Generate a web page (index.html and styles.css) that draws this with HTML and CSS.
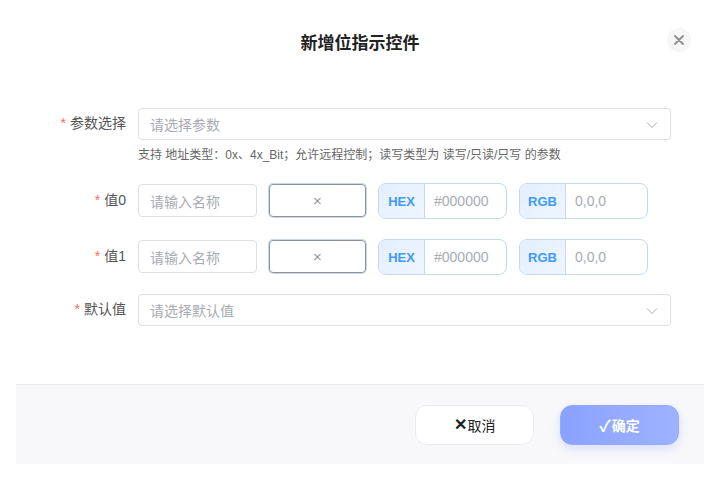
FILE: index.html
```html
<!DOCTYPE html>
<html lang="zh-CN">

<head>
    <meta charset="UTF-8">
    <meta name="viewport" content="width=device-width, initial-scale=1.0">
    <title>新增位指示控件</title>
    <link rel="stylesheet" href="styles.css">
</head>

<body>
    <div class="dialog">
        <div class="dialog-header">
            <span class="dialog-title">新增位指示控件</span>
            <button class="close-btn">
                <svg width="10" height="10" viewBox="0 0 10 10"><path d="M1 1L9 9M9 1L1 9" stroke="#8c8c8c" stroke-width="1.8" stroke-linecap="round"/></svg>
            </button>
        </div>

        <div class="dialog-body">
            <div class="form-item">
                <label class="form-label"><span class="req">*</span>参数选择</label>
                <div class="form-content">
                    <div class="select-box">
                        <span class="placeholder">请选择参数</span>
                        <svg class="chevron" width="12" height="8" viewBox="0 0 12 8"><path d="M1 1.5L6 6.5L11 1.5" fill="none" stroke="#a8abb2" stroke-width="1"/></svg>
                    </div>
                    <div class="hint">支持 地址类型：0x、4x_Bit；允许远程控制；读写类型为 读写/只读/只写 的参数</div>
                </div>
            </div>

            <div class="form-item value-item">
                <label class="form-label"><span class="req">*</span>值0</label>
                <div class="form-content value-row">
                    <div class="text-input"><span class="placeholder">请输入名称</span></div>
                    <div class="color-box">×</div>
                    <div class="code-group">
                        <span class="code-prefix">HEX</span>
                        <span class="code-value">#000000</span>
                    </div>
                    <div class="code-group">
                        <span class="code-prefix">RGB</span>
                        <span class="code-value">0,0,0</span>
                    </div>
                </div>
            </div>

            <div class="form-item value-item last-value">
                <label class="form-label"><span class="req">*</span>值1</label>
                <div class="form-content value-row">
                    <div class="text-input"><span class="placeholder">请输入名称</span></div>
                    <div class="color-box">×</div>
                    <div class="code-group">
                        <span class="code-prefix">HEX</span>
                        <span class="code-value">#000000</span>
                    </div>
                    <div class="code-group">
                        <span class="code-prefix">RGB</span>
                        <span class="code-value">0,0,0</span>
                    </div>
                </div>
            </div>

            <div class="form-item">
                <label class="form-label"><span class="req">*</span>默认值</label>
                <div class="form-content">
                    <div class="select-box">
                        <span class="placeholder">请选择默认值</span>
                        <svg class="chevron" width="12" height="8" viewBox="0 0 12 8"><path d="M1 1.5L6 6.5L11 1.5" fill="none" stroke="#a8abb2" stroke-width="1"/></svg>
                    </div>
                </div>
            </div>
        </div>

        <div class="dialog-footer">
            <button class="btn btn-cancel"><span class="btn-icon">✕</span>取消</button>
            <button class="btn btn-confirm"><span class="btn-icon">✓</span>确定</button>
        </div>
    </div>
</body>

</html>
```

FILE: styles.css
```css
body {
    margin: 0;
    font-family: "Liberation Sans", "Noto Sans CJK SC", sans-serif;
    background: #fff;
}

.dialog {
    margin-left: 16px;
    width: 688px;
    background: #fff;
}

.dialog-header {
    position: relative;
    height: 84px;
    display: flex;
    align-items: center;
    justify-content: center;
}

.dialog-title {
    font-size: 17px;
    font-weight: bold;
    color: #222;
    margin-top: -1px;
}

.close-btn {
    position: absolute;
    top: 28px;
    right: 13px;
    width: 24px;
    height: 24px;
    border: none;
    border-radius: 50%;
    background: #f6f6f7;
    padding: 0;
    display: flex;
    align-items: center;
    justify-content: center;
}

.dialog-body {
    padding: 24px 33px 58px 0;
}

.form-item {
    display: flex;
    margin-bottom: 20px;
}

.form-item:last-child {
    margin-bottom: 0;
}

.form-label {
    width: 110px;
    flex-shrink: 0;
    padding-right: 12px;
    text-align: right;
    font-size: 14px;
    color: #555;
    line-height: 30px;
}

.req {
    color: #f56c6c;
    margin-right: 4px;
}

.form-content {
    flex: 1;
}

.select-box {
    height: 30px;
    border: 1px solid #dcdfe6;
    border-radius: 4px;
    display: flex;
    align-items: center;
    justify-content: space-between;
    padding: 0 12px 0 11px;
}

.placeholder {
    font-size: 14px;
    color: #a8abb2;
}

.chevron {
    margin-top: 1px;
}

.hint {
    margin-top: 6px;
    font-size: 12px;
    line-height: 18px;
    color: #666;
}

.value-item {
    margin-bottom: 24px;
}

.value-item.last-value {
    margin-bottom: 22px;
}

.value-item .form-label {
    line-height: 32px;
}

.value-row {
    display: flex;
    gap: 11px;
    height: 32px;
}

.text-input {
    width: 119px;
    box-sizing: border-box;
    height: 33px;
    border: 1px solid #dcdfe6;
    border-radius: 4px;
    display: flex;
    align-items: center;
    padding-left: 11px;
}

.color-box {
    width: 97px;
    box-sizing: border-box;
    height: 33px;
    border: 1px solid #8c939d;
    border-radius: 4px;
    box-shadow: 0 0 0 1px #c9daef;
    display: flex;
    align-items: center;
    justify-content: center;
    font-size: 15px;
    color: #9a9a9a;
    margin-left: 1px;
}

.code-group {
    width: 129px;
    box-sizing: border-box;
    height: 36px;
    margin-top: -1px;
    border: 1px solid #c5d8ef;
    border-radius: 8px;
    display: flex;
    overflow: hidden;
    margin-left: 1px;
}

.code-prefix {
    width: 45px;
    flex-shrink: 0;
    background: linear-gradient(135deg, #e3efff, #eef5ff);
    border-right: 1px solid #c5d8ef;
    color: #3f9bf5;
    font-weight: bold;
    font-size: 13px;
    display: flex;
    align-items: center;
    justify-content: center;
}

.code-value {
    flex: 1;
    display: flex;
    align-items: center;
    padding-left: 9px;
    font-size: 14px;
    color: #a8abb2;
}

.dialog-footer {
    height: 80px;
    box-sizing: border-box;
    background: #f8f8fb;
    border-top: 1px solid #e8e8ea;
    display: flex;
    justify-content: flex-end;
    align-items: center;
    gap: 26px;
    padding-right: 25px;
}

.btn {
    width: 119px;
    height: 40px;
    border-radius: 12px;
    font-family: "Liberation Sans", "Noto Sans CJK SC", sans-serif;
    font-size: 14px;
    padding: 0;
    display: flex;
    align-items: center;
    justify-content: center;
}

.btn-icon {
    font-size: 16px;
    font-weight: bold;
    margin-right: 1px;
}

.btn-cancel {
    background: #fff;
    border: 1px solid #ececef;
    color: #222;
}

.btn-confirm {
    background: linear-gradient(90deg, #8aa2ff, #9db3ff);
    border: 1px solid #93aaff;
    color: #fff;
    font-weight: bold;
    box-shadow: 0 4px 10px rgba(130, 150, 255, 0.25);
}
```
